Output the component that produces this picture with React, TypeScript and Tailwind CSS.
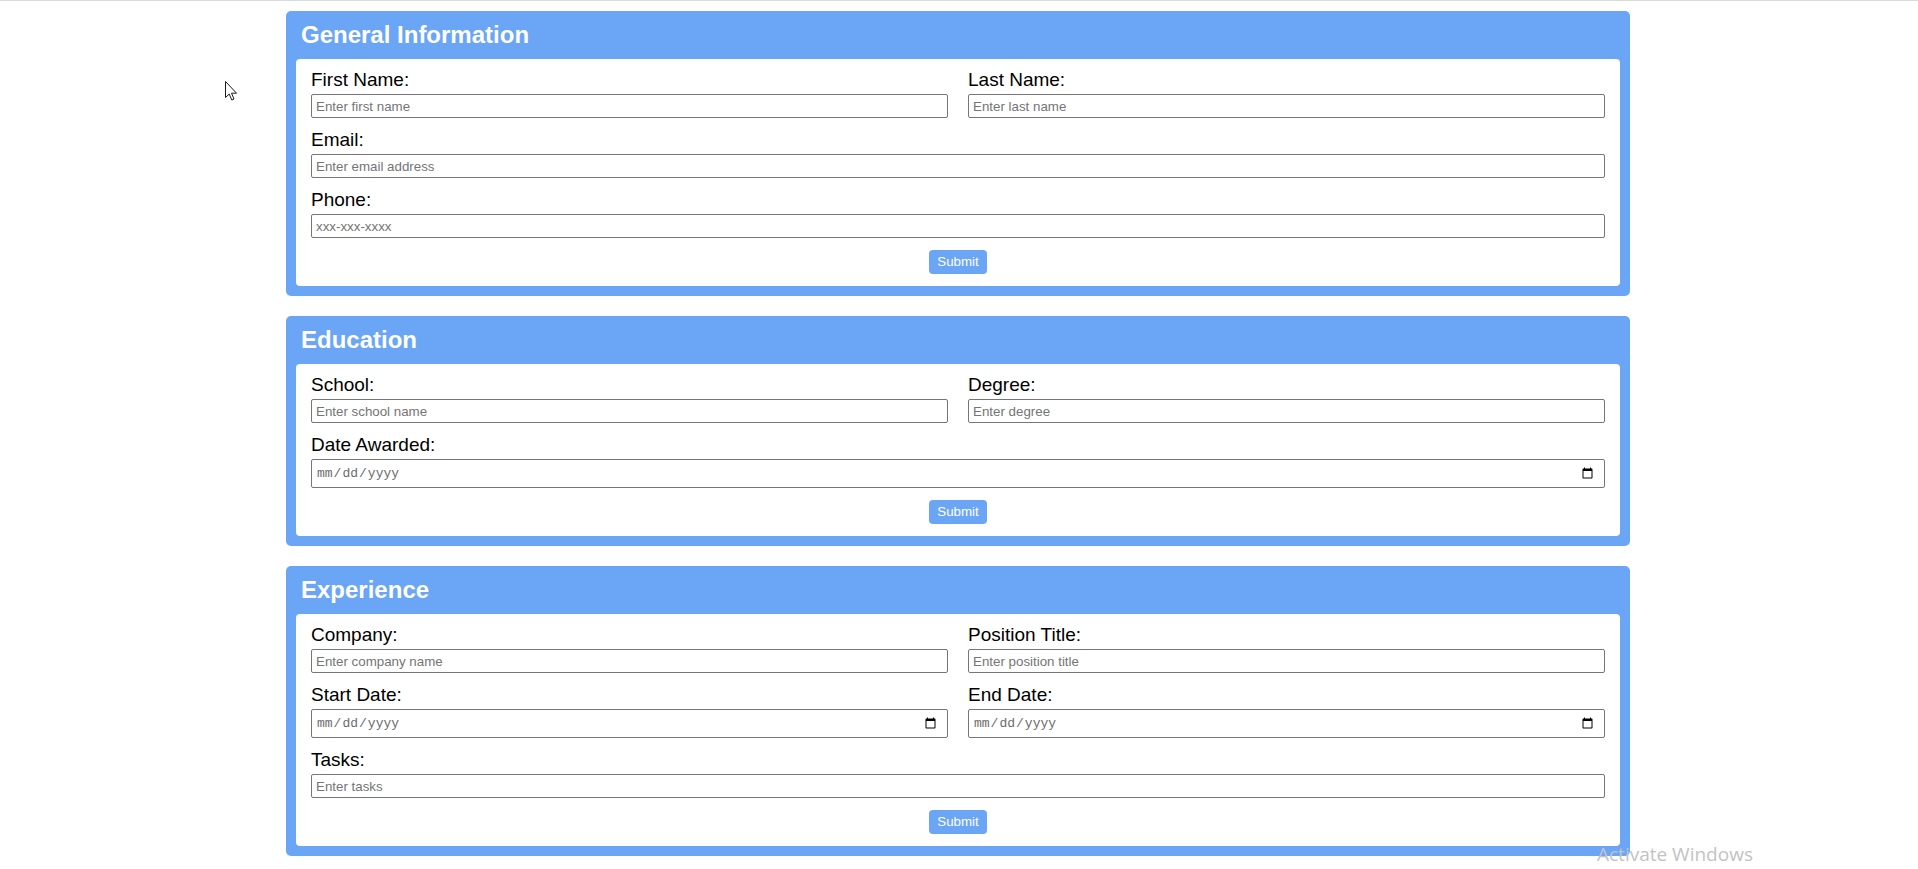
import React from "react";

const inputCls =
  "w-full h-[24px] border border-[#767676] rounded-[2px] px-[4px] text-[13.33px] text-black bg-white placeholder:text-[#757575] outline-none font-['Liberation_Sans',Arial,sans-serif]";
const dateCls =
  "w-full h-[29px] border border-[#767676] rounded-[2px] pl-[4px] pr-[8px] text-[13px] text-[#6b6b6b] bg-white outline-none font-['Liberation_Mono','DejaVu_Sans_Mono',monospace]";

function Field({
  label,
  placeholder,
  type = "text",
}: {
  label: string;
  placeholder?: string;
  type?: string;
}) {
  return (
    <div className="flex flex-col gap-[5px] flex-1 min-w-0">
      <label className="text-[19px] leading-[19px] text-black">{label}</label>
      {type === "date" ? (
        <input type="date" className={dateCls} />
      ) : (
        <input type={type} placeholder={placeholder} className={inputCls} />
      )}
    </div>
  );
}

function Row({ children }: { children: React.ReactNode }) {
  return <div className="flex gap-[20px]">{children}</div>;
}

function Section({
  title,
  children,
}: {
  title: string;
  children: React.ReactNode;
}) {
  return (
    <section className="bg-[#6aa6f5] rounded-[5px] p-[10px]">
      <h2 className="text-white text-[24px] font-bold leading-[27px] pl-[5px] mb-[11px]">
        {title}
      </h2>
      <div className="bg-white rounded-[4px] px-[15px] pt-[11px] pb-[12px] flex flex-col gap-[12px]">
        {children}
        <div className="flex justify-center">
          <button
            type="button"
            className="w-[58px] h-[24px] rounded-[4px] bg-[#6aa6f5] text-white text-[13.33px] leading-[24px] font-['Liberation_Sans',Arial,sans-serif]"
          >
            Submit
          </button>
        </div>
      </div>
    </section>
  );
}

export default function App() {
  return (
    <div className="relative min-h-screen bg-white font-['Liberation_Sans',Arial,sans-serif]">
      <div className="h-px bg-[#dadada]" />
      <div className="ml-[286px] w-[1344px] pt-[10px] flex flex-col gap-[20px]">
        <Section title="General Information">
          <Row>
            <Field label="First Name:" placeholder="Enter first name" />
            <Field label="Last Name:" placeholder="Enter last name" />
          </Row>
          <Field label="Email:" placeholder="Enter email address" type="email" />
          <Field label="Phone:" placeholder="xxx-xxx-xxxx" type="tel" />
        </Section>
        <Section title="Education">
          <Row>
            <Field label="School:" placeholder="Enter school name" />
            <Field label="Degree:" placeholder="Enter degree" />
          </Row>
          <Field label="Date Awarded:" type="date" />
        </Section>
        <Section title="Experience">
          <Row>
            <Field label="Company:" placeholder="Enter company name" />
            <Field label="Position Title:" placeholder="Enter position title" />
          </Row>
          <Row>
            <Field label="Start Date:" type="date" />
            <Field label="End Date:" type="date" />
          </Row>
          <Field label="Tasks:" placeholder="Enter tasks" />
        </Section>
      </div>

      {/* mouse cursor */}
      <svg
        className="absolute left-[225px] top-[81px]"
        width="13"
        height="21"
        viewBox="0 0 13 21"
      >
        <path
          d="M0.5 0.5 L0.5 16.5 L4.2 13 L6.8 19 L9 18 L6.5 12.2 L11.5 12.2 Z"
          fill="#fff"
          stroke="#1a1a1a"
          strokeWidth="1"
          strokeLinejoin="round"
        />
      </svg>

      {/* watermark */}
      <div className="absolute left-[1597px] top-[842px] text-[19px] leading-[24px] text-[#c3c3c3] font-['Open_Sans','Noto_Sans',sans-serif] whitespace-nowrap">
        Activate Windows
      </div>
    </div>
  );
}
